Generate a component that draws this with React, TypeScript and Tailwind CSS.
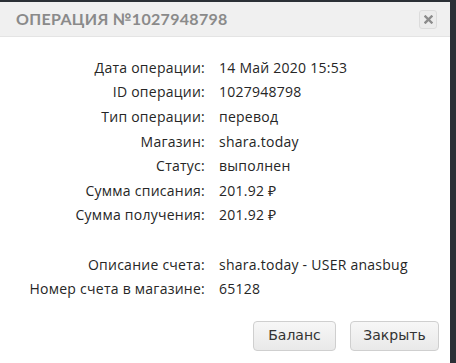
const rows: [string, string][] = [
  ["Дата операции:", "14 Май 2020 15:53"],
  ["ID операции:", "1027948798"],
  ["Тип операции:", "перевод"],
  ["Магазин:", "shara.today"],
  ["Статус:", "выполнен"],
  ["Сумма списания:", "201.92 ₽"],
  ["Сумма получения:", "201.92 ₽"],
  ["", ""],
  ["Описание счета:", "shara.today - USER anasbug"],
  ["Номер счета в магазине:", "65128"],
]

export default function App() {
  return (
    <div className="w-[456px] h-[363px] bg-[#2b3036] flex overflow-hidden">
      <div className="w-[450px] h-full bg-white mt-[2px] flex flex-col">
        <div className="h-[35px] bg-[#f0f0f0] border-b border-[#e4e4e4] flex items-center justify-between pl-[16px] pr-[13px]">
          <h1 className="text-[16px] font-bold tracking-[0.3px] text-[#8a8a8a] uppercase font-['Lato',sans-serif]">
            Операция №1027948798
          </h1>
          <button className="w-[18px] h-[19px] rounded-[3px] border border-[#dcdcdc] bg-[#ececec] flex items-center justify-center">
            <svg width="9" height="9" viewBox="0 0 9 9">
              <path d="M1.5 1.5 L7.5 7.5 M7.5 1.5 L1.5 7.5" stroke="#8c8c8c" strokeWidth="2.4" strokeLinecap="square" />
            </svg>
          </button>
        </div>
        <div className="pt-[18px] flex flex-col font-['Open_Sans',sans-serif] text-[14px] font-medium tracking-[0.25px] text-[#262626]">
          {rows.map(([label, value], i) => (
            <div key={i} className="flex h-[24.6px] items-center">
              <span className="w-[205px] text-right">{label}</span>
              <span className="pl-[14px]">{value}</span>
            </div>
          ))}
        </div>
        <div className="flex justify-end gap-[14px] pr-[11px] mt-[20px] font-['DejaVu_Sans',sans-serif] text-[14px] text-[#333]">
          <button className="w-[83px] h-[30px] rounded-[4px] border border-[#cfcfcf] bg-gradient-to-b from-[#f7f7f7] to-[#e9e9e9]">Баланс</button>
          <button className="w-[89px] h-[30px] rounded-[4px] border border-[#cfcfcf] bg-gradient-to-b from-[#f7f7f7] to-[#e9e9e9]">Закрыть</button>
        </div>
      </div>
    </div>
  )
}
